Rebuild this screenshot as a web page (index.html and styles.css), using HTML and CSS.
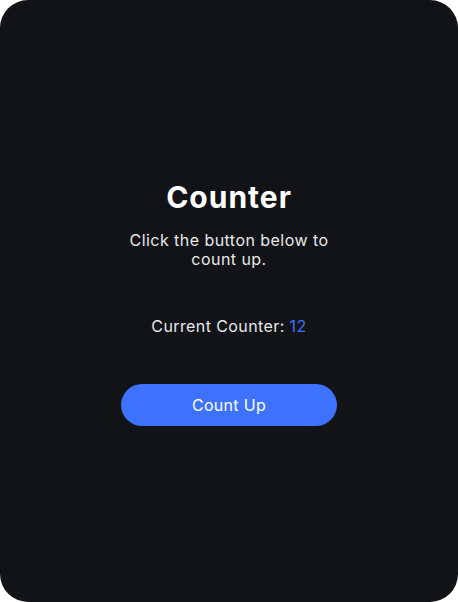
FILE: index.html
```html
<!DOCTYPE html>
<html>
<head>
<meta charset="utf-8">
<link rel="stylesheet" href="styles.css">
</head>
<body>
<div class="card">
  <div class="content">
    <h1 class="title">Counter</h1>
    <p class="subtitle">Click the button below to count up.</p>
    <p class="counter">Current Counter: <span class="num">12</span></p>
    <button class="btn">Count Up</button>
  </div>
</div>
</body>
</html>
```
FILE: styles.css
```css
html, body { margin: 0; padding: 0; background: #ffffff; }
.card {
  width: 458px;
  height: 602px;
  background: #111317;
  border-radius: 28px;
  display: flex;
  align-items: center;
  justify-content: center;
  font-family: Inter, "Open Sans", sans-serif;
  color: #ffffff;
}
.content {
  width: 216px;
  display: flex;
  flex-direction: column;
  align-items: center;
  text-align: center;
  padding-top: 3px;
}
.title {
  margin: 0;
  font-size: 30px;
  line-height: 34px;
  font-weight: 700;
  letter-spacing: 1px;
}
.subtitle {
  margin: 17px 0 0 0;
  font-size: 16px;
  line-height: 19px;
  color: #e8e8ea;
  width: 216px;
  letter-spacing: 0.45px;
}
.counter {
  margin: 48px 0 0 0;
  font-size: 16px;
  line-height: 19px;
  color: #e8e8ea;
  letter-spacing: 0.4px;
}
.num { color: #3d72fe; }
.btn {
  margin-top: 48px;
  width: 216px;
  height: 42px;
  border: none;
  border-radius: 21px;
  background: #3d72fe;
  color: #ffffff;
  font-family: Inter, "Open Sans", sans-serif;
  font-size: 16px;
  letter-spacing: 0.3px;
}
```
